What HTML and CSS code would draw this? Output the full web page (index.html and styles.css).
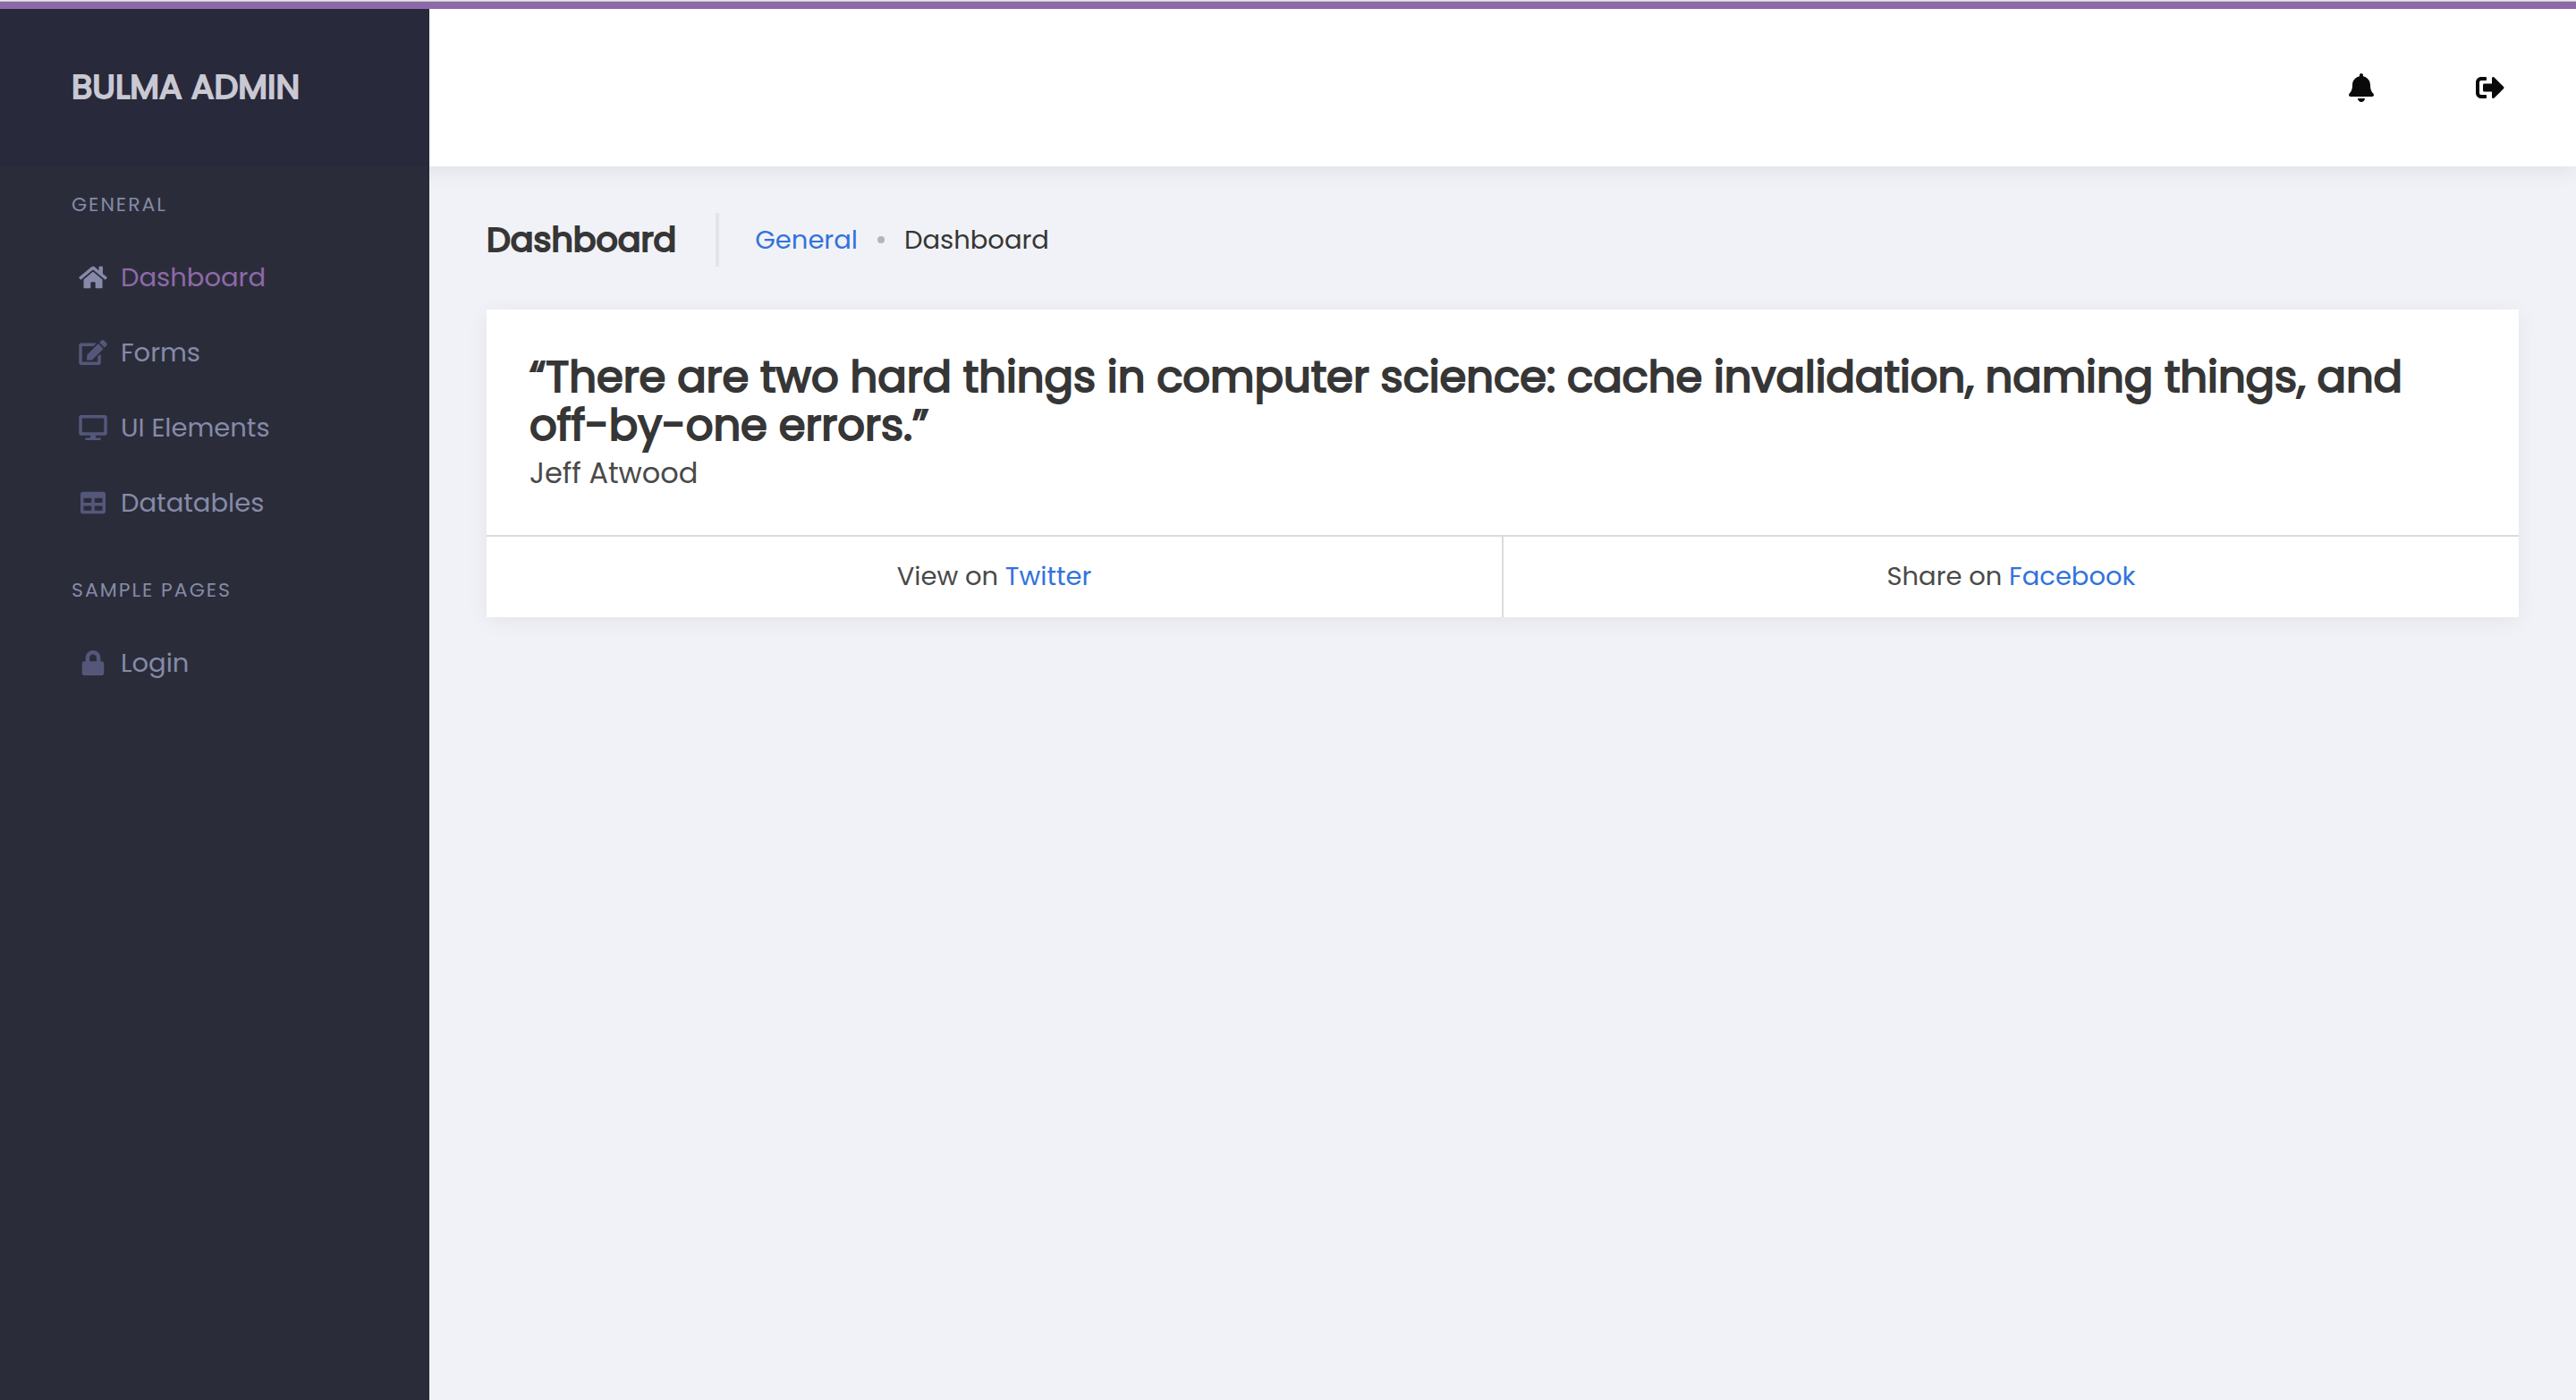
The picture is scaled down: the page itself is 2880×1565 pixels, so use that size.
FILE: index.html
```html
<!DOCTYPE html>
<html lang="en">
<head>
<meta charset="utf-8">
<meta name="viewport" content="width=device-width, initial-scale=1">
<title>Dashboard - Bulma Admin</title>
<link rel="stylesheet" href="styles.css">
</head>
<body>
<div class="app">
  <header class="topbar">
    <a class="brand" href="#">BULMA ADMIN</a>
    <div class="actions">
      <button class="action" type="button" aria-label="Notifications">
        <svg class="action-icon" viewBox="0 0 448 512"><path d="M224 512c35.32 0 63.97-28.65 63.97-64H160.03c0 35.35 28.65 64 63.97 64zm215.39-149.71c-19.32-20.76-55.47-51.99-55.47-154.29 0-77.7-54.48-139.9-127.94-155.16V32c0-17.67-14.32-32-31.98-32s-31.98 14.33-31.98 32v20.84C118.56 68.1 64.08 130.3 64.08 208c0 102.3-36.15 133.53-55.47 154.29-6 6.45-8.66 14.16-8.61 21.71.11 16.4 12.98 32 32.1 32h383.8c19.12 0 32-15.6 32.1-32 .05-7.55-2.61-15.27-8.61-21.71z"/></svg>
      </button>
      <button class="action" type="button" aria-label="Sign out">
        <svg class="action-icon" viewBox="0 0 512 512"><path d="M497 273L329 441c-15 15-41 4.5-41-17v-96H152c-13.3 0-24-10.7-24-24v-96c0-13.3 10.7-24 24-24h136V88c0-21.4 25.9-32 41-17l168 168c9.3 9.4 9.3 24.6 0 34zM192 436v-40c0-6.6-5.4-12-12-12H96c-17.7 0-32-14.3-32-32V160c0-17.7 14.3-32 32-32h84c6.6 0 12-5.4 12-12V76c0-6.6-5.4-12-12-12H96c-53 0-96 43-96 96v192c0 53 43 96 96 96h84c6.6 0 12-5.4 12-12z"/></svg>
      </button>
    </div>
  </header>
  <div class="body">
    <nav class="sidebar" aria-label="Main">
      <h2 class="menu-label">General</h2>
      <ul class="menu">
        <li><a class="menu-link is-active" href="#"><svg class="menu-icon" viewBox="0 0 576 512"><path d="M280.37 148.26L96 300.11V464a16 16 0 0 0 16 16l112.06-.29a16 16 0 0 0 15.92-16V368a16 16 0 0 1 16-16h64a16 16 0 0 1 16 16v95.64a16 16 0 0 0 16 16.05L464 480a16 16 0 0 0 16-16V300L295.67 148.26a12.19 12.19 0 0 0-15.3 0zM571.6 251.47L488 182.56V44.05a12 12 0 0 0-12-12h-56a12 12 0 0 0-12 12v72.61L318.47 43a48 48 0 0 0-61 0L4.34 251.47a12 12 0 0 0-1.6 16.9l25.5 31A12 12 0 0 0 45.15 301l235.22-193.74a12.19 12.19 0 0 1 15.3 0L530.9 301a12 12 0 0 0 16.9-1.6l25.5-31a12 12 0 0 0-1.7-16.93z"/></svg>Dashboard</a></li>
        <li><a class="menu-link" href="#"><svg class="menu-icon" viewBox="0 0 576 512"><path d="M402.6 83.2l90.2 90.2c3.8 3.8 3.8 10 0 13.8L274.4 405.6l-92.8 10.3c-12.4 1.4-22.9-9.1-21.5-21.5l10.3-92.8L388.8 83.2c3.8-3.8 10-3.8 13.8 0zm162-22.9l-48.8-48.8c-15.2-15.2-39.9-15.2-55.2 0l-35.4 35.4c-3.8 3.8-3.8 10 0 13.8l90.2 90.2c3.8 3.8 10 3.8 13.8 0l35.4-35.4c15.2-15.3 15.2-40 0-55.2zM384 346.2V448H64V128h229.8c3.2 0 6.2-1.3 8.5-3.5l40-40c7.6-7.6 2.2-20.5-8.5-20.5H48C21.5 64 0 85.5 0 112v352c0 26.5 21.5 48 48 48h352c26.5 0 48-21.5 48-48V306.2c0-10.7-12.9-16-20.5-8.5l-40 40c-2.2 2.3-3.5 5.3-3.5 8.5z"/></svg>Forms</a></li>
        <li><a class="menu-link" href="#"><svg class="menu-icon" viewBox="0 0 576 512"><path d="M528 0H48C21.5 0 0 21.5 0 48v320c0 26.5 21.5 48 48 48h192l-16 48h-72c-13.3 0-24 10.7-24 24s10.7 24 24 24h272c13.3 0 24-10.7 24-24s-10.7-24-24-24h-72l-16-48h192c26.5 0 48-21.5 48-48V48c0-26.5-21.5-48-48-48zm-16 352H64V64h448v288z"/></svg>UI Elements</a></li>
        <li><a class="menu-link" href="#"><svg class="menu-icon" viewBox="0 0 512 512"><path d="M464 32H48C21.49 32 0 53.49 0 80v352c0 26.51 21.49 48 48 48h416c26.51 0 48-21.49 48-48V80c0-26.51-21.49-48-48-48zM224 416H64v-96h160v96zm0-160H64v-96h160v96zm224 160H288v-96h160v96zm0-160H288v-96h160v96z"/></svg>Datatables</a></li>
      </ul>
      <h2 class="menu-label">Sample Pages</h2>
      <ul class="menu">
        <li><a class="menu-link" href="#"><svg class="menu-icon" viewBox="0 0 448 512"><path d="M400 224h-24v-72C376 68.2 307.8 0 224 0S72 68.2 72 152v72H48c-26.5 0-48 21.5-48 48v192c0 26.5 21.5 48 48 48h352c26.5 0 48-21.5 48-48V272c0-26.5-21.5-48-48-48zm-104 0H152v-72c0-39.7 32.3-72 72-72s72 32.3 72 72v72z"/></svg>Login</a></li>
      </ul>
    </nav>
    <main class="content">
      <div class="page-head">
        <h1 class="page-title">Dashboard</h1>
        <nav class="breadcrumb" aria-label="Breadcrumb">
          <a class="link" href="#">General</a>
          <span class="dot"></span>
          <span>Dashboard</span>
        </nav>
      </div>
      <article class="card">
        <div class="card-body">
          <p class="quote">“There are two hard things in computer science: cache invalidation, naming things, and off-by-one errors.”</p>
          <p class="author">Jeff Atwood</p>
        </div>
        <footer class="card-footer">
          <p class="card-cell">View on <a class="link" href="#">Twitter</a></p>
          <p class="card-cell">Share on <a class="link" href="#">Facebook</a></p>
        </footer>
      </article>
    </main>
  </div>
</div>
</body>
</html>
```
FILE: styles.css
```css
*,
*::before,
*::after {
  box-sizing: border-box;
}

body,
h1,
h2,
p,
ul {
  margin: 0;
  padding: 0;
}

body {
  background: #f1f2f7;
  color: #363636;
  font-family: Poppins, Inter, "Liberation Sans", sans-serif;
  font-size: 29px;
  font-weight: 400;
  line-height: 48px;
}

a {
  text-decoration: none;
}

svg {
  fill: currentColor;
}

.app {
  display: flex;
  flex-direction: column;
  min-height: 100vh;
  border-top: 1px solid #efefef;
}

.topbar {
  position: relative;
  z-index: 1;
  display: flex;
  height: 185px;
  border-top: 1px solid #c2c2c2;
  background: #fff;
  box-shadow: 0 4px 24px rgba(0, 0, 0, 0.08);
}

.topbar::before {
  content: "";
  position: absolute;
  inset: 0 0 auto;
  height: 8px;
  background: #8e69a9;
}

.brand {
  display: flex;
  flex: 0 0 480px;
  align-items: center;
  padding: 6px 0 0 80px;
  background: #28293b;
  color: #c9c8d3;
  font-size: 38px;
  -webkit-text-stroke: 2px currentColor;
}

.actions {
  display: flex;
  margin-left: auto;
  padding: 8px 24px 0 0;
}

.action {
  display: grid;
  place-items: center;
  width: 144px;
  padding: 0;
  border: 0;
  background: none;
  color: #0a0a0a;
  cursor: pointer;
}

.action-icon {
  height: 32px;
}

.body {
  position: relative;
  display: flex;
  flex: 1;
}

.sidebar {
  position: relative;
  z-index: 2;
  flex: 0 0 480px;
  padding-top: 19px;
  background: #2a2d39;
}

.menu-label {
  padding-left: 80px;
  color: #868aa8;
  font-size: 22px;
  font-weight: 400;
  letter-spacing: 2px;
  text-transform: uppercase;
}

.menu {
  margin-bottom: 32px;
  padding-top: 15px;
  list-style: none;
}

.menu-link {
  display: flex;
  align-items: center;
  gap: 15px;
  height: 84px;
  padding-left: 88px;
  color: #868aa8;
}

.menu-icon {
  width: 32px;
  height: 28px;
  color: #55577a;
}

.menu-link.is-active {
  color: #8e69a9;
}

.is-active .menu-icon {
  color: #868aa8;
}

.content {
  flex: 1;
  min-width: 0;
  padding: 52px 64px;
}

.page-head {
  display: flex;
  align-items: center;
  margin-bottom: 48px;
}

.page-title {
  padding-right: 44px;
  border-right: 4px solid #e3e4ea;
  font-size: 38px;
  font-weight: 400;
  line-height: 60px;
  -webkit-text-stroke: 2px currentColor;
}

.breadcrumb {
  display: flex;
  align-items: center;
  padding-left: 40px;
}

.dot {
  width: 8px;
  height: 8px;
  margin: 0 22px;
  border-radius: 50%;
  background: #b5b5b5;
}

.link {
  color: #3273dc;
}

.card {
  background: #fff;
  box-shadow: 0 4px 24px rgba(0, 0, 0, 0.06);
}

.card-body {
  padding: 49px 48px 47px;
}

.quote {
  margin-bottom: 4px;
  font-size: 48px;
  line-height: 54px;
  -webkit-text-stroke: 2px currentColor;
}

.author {
  color: #4a4a4a;
  font-size: 32px;
  line-height: 44px;
}

.card-footer {
  display: flex;
  border-top: 2px solid #dbdbdb;
  color: #4a4a4a;
}

.card-cell {
  flex: 1;
  padding: 20px 24px 22px;
  text-align: center;
}

.card-cell + .card-cell {
  border-left: 2px solid #dbdbdb;
}
```
